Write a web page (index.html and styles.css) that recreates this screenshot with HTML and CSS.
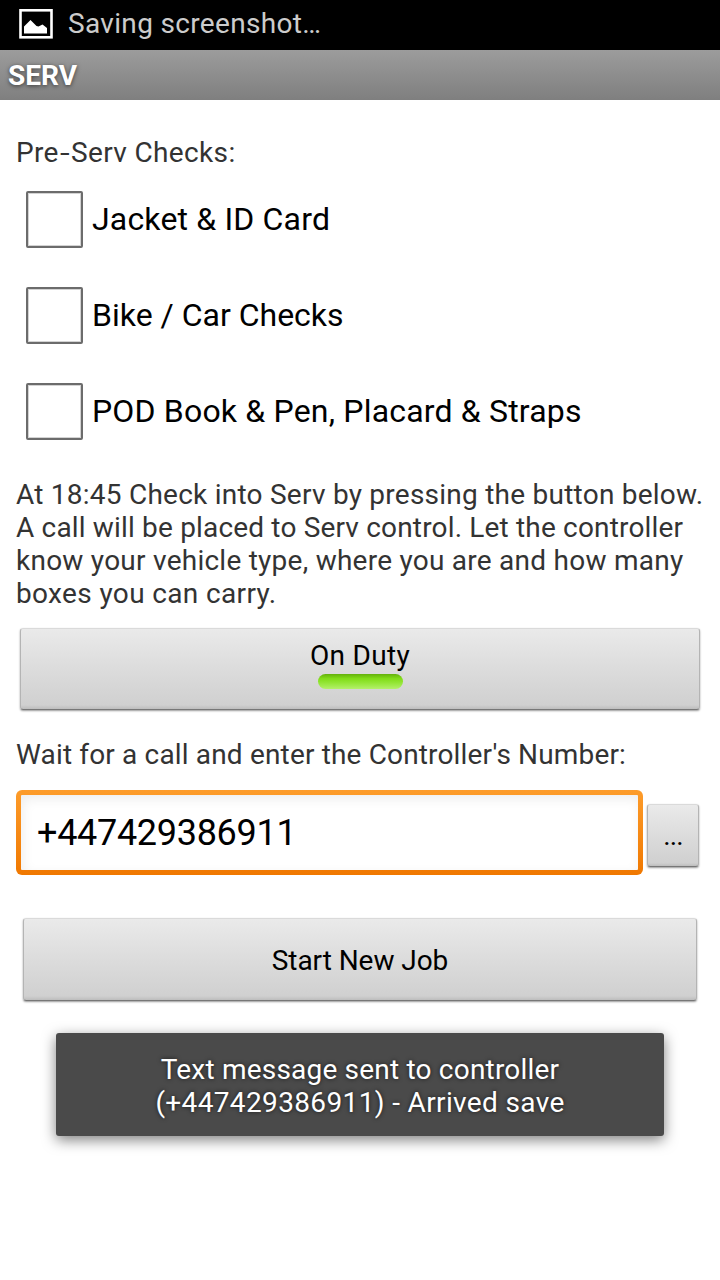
FILE: index.html
```html
<!DOCTYPE html>
<html lang="en">
<head>
<meta charset="utf-8">
<title>SERV</title>
<link rel="stylesheet" href="styles.css">
</head>
<body>
<div class="status">
  <svg class="status-icon" width="34" height="30" viewBox="0 0 34 30">
    <rect x="1.5" y="1.300" width="31" height="27" fill="none" stroke="#fff" stroke-width="2.6"/>
    <path d="M5 24.500V17.500L8 14.500L11.500 11L17.500 17L19.500 17.500L23.500 15.500L28 19V24.500Z" fill="#fff"/>
  </svg>
  <span class="t-status">Saving screenshot…</span>
</div>
<header class="title"><span>SERV</span></header>
<main class="form">
  <p class="label"><span class="t-pre">Pre<span class="hyphen">-</span>Serv Checks:</span></p>
  <div class="check"><i class="box"></i><span class="t-c1">Jacket &amp; ID Card</span></div>
  <div class="check"><i class="box"></i><span class="t-c2">Bike / Car Checks</span></div>
  <div class="check"><i class="box"></i><span class="t-c3">POD Book &amp; Pen, Placard &amp; Straps</span></div>
  <p class="label info">
    <span class="t-l1">At 18:45 Check into Serv by pressing the button below.</span><br>
    <span class="t-l2">A call will be placed to Serv control. Let the controller</span><br>
    <span class="t-l3">know your vehicle type, where you are and how many</span><br>
    <span class="t-l4">boxes you can carry.</span>
  </p>
  <div class="btn duty"><span class="t-duty">On Duty</span><i class="led"></i></div>
  <p class="label wait"><span class="t-wait">Wait for a call and enter the Controller's Number:</span></p>
  <div class="row">
    <div class="field"><div class="field-in"><span class="t-num">+447429386911</span></div></div>
    <div class="btn more"><span class="t-more">...</span></div>
  </div>
  <div class="btn start"><span class="t-start">Start New Job</span></div>
</main>
<div class="toast">
  <span class="t-t1">Text message sent to controller</span>
  <span class="t-t2">(+447429386911) - Arrived save</span>
</div>
</body>
</html>
```
FILE: styles.css
```css
* { box-sizing: border-box; }
body { margin: 0; height: 1280px; overflow: hidden; background: #fff; font-family: Roboto, sans-serif; font-size: 28px; line-height: 33px; color: #000; white-space: nowrap; }
p { margin: 0; }
.status { height: 50px; background: #000; color: #ccc; display: flex; padding: 7px 0 0 68px; position: relative; }
.status-icon { position: absolute; left: 19px; top: 9px; }
.title { height: 50px; padding: 9px 0 0 8px; background: linear-gradient(#9c9c9c, #7f7f7f); color: #fff; font-weight: 700; text-shadow: 0 1px 4px rgba(0,0,0,.6); }
.form { padding: 36px 16px 0; }
.label { color: #333; }
.check { height: 96px; display: flex; align-items: center; gap: 9px; padding-left: 10px; font-size: 32px; line-height: 38px; }
.label + .check { margin-top: 2px; }
.box { width: 57px; height: 57px; border: 2px solid #6c6c6c; outline: 1px solid rgba(108,108,108,.3); outline-offset: -3px; border-radius: 2px; }
.info { margin-top: 19px; height: 132px; }
.btn { border-radius: 3px; border: 1px solid #b4b4b4; border-top-color: #dadada; border-bottom: 1px solid #777; background: linear-gradient(#eaeaea, #dcdcdc 50%, #d0d0d0 95%, #bdbdbd); box-shadow: 0 1px 2px rgba(0,0,0,.4); display: flex; justify-content: center; }
.duty { margin: 18px 4px 0; height: 82px; flex-direction: column; align-items: center; justify-content: flex-start; padding-top: 10px; }
.led { width: 85px; height: 15px; border-radius: 8px; margin: 2px 0 0 1px; background: linear-gradient(#64b00c, #81dc18 30%, #94e637 60%, #b4f06c); }
.wait { margin-top: 28px; }
.row { display: flex; gap: 4px; margin-top: 19px; }
.field { width: 627px; height: 85px; padding: 5px; border-radius: 6px; background: linear-gradient(#fd9c2b, #f07800); }
.field-in { height: 75px; padding: 17px 0 0 16px; background: #fff; box-shadow: inset 2px 4px 12px rgba(0,0,0,.07); border-radius: 1px; font-size: 36px; line-height: 42px; }
.more { width: 52px; height: 63px; margin-top: 14px; padding-top: 14px; }
.start { margin: 43px 7px 0; height: 83px; padding-top: 25px; }
.toast { width: 608px; height: 103px; margin: 32px 0 0 56px; padding-top: 20px; border-radius: 3px; background: #4a4a4a; color: #fff; box-shadow: 0 4px 14px rgba(0,0,0,.5); text-shadow: 0 0 4px rgba(0,0,0,.7); display: flex; flex-direction: column; align-items: center; }

/* Tracking for each line of text */
.t-status { letter-spacing: .33px; }
.t-pre { letter-spacing: .36px; }
.hyphen { display: inline-block; transform: scaleX(1.25); margin: 0 2px; }
.t-c1 { letter-spacing: .17px; }
.t-c3 { letter-spacing: .18px; }
.t-l1 { letter-spacing: .24px; }
.t-l2 { letter-spacing: .17px; }
.t-l3 { letter-spacing: .25px; }
.t-l4 { letter-spacing: .36px; }
.t-duty { letter-spacing: .3px; }
.t-wait { letter-spacing: .16px; }
.t-num { letter-spacing: -.3px; }
.t-more { letter-spacing: -.8px; }
.t-start { letter-spacing: -.05px; }
.t-t1 { letter-spacing: .2px; }
.t-t2 { letter-spacing: .36px; }
```
